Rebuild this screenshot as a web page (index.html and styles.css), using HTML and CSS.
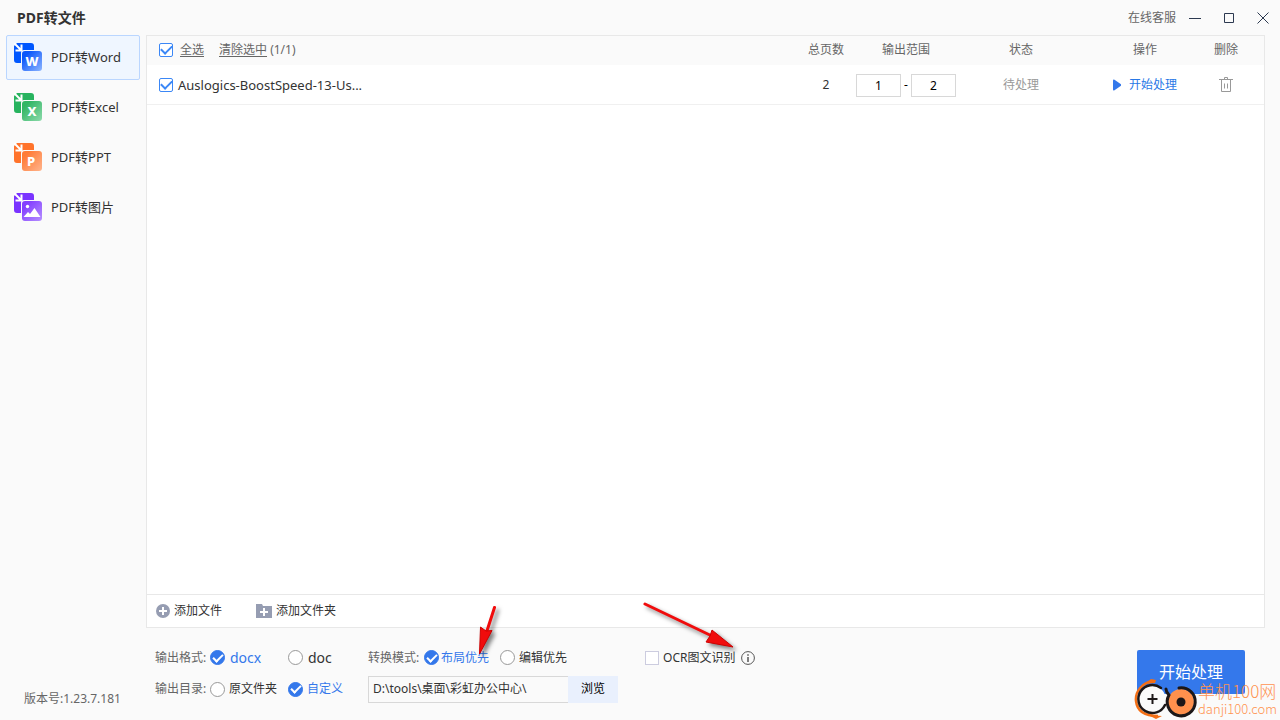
FILE: index.html
```html
<!DOCTYPE html>
<html lang="zh-CN">
<head>
<meta charset="utf-8">
<title>PDF转文件</title>
<link rel="stylesheet" href="styles.css">
</head>
<body>
<header class="titlebar">
  <h1 class="title">PDF转文件</h1>
  <a class="service" href="#">在线客服</a>
  <button class="win" aria-label="最小化"><svg width="14" height="14"><path d="M1 7.500h12" /></svg></button>
  <button class="win" aria-label="最大化"><svg width="14" height="14"><path d="M2.500 2.500h9v9h-9z" /></svg></button>
  <button class="win" aria-label="关闭"><svg width="14" height="14"><path d="M1.500 1.500l11 11M12.500 1.500l-11 11" /></svg></button>
</header>
<div class="body">
  <aside class="sidebar">
    <nav class="nav">
      <button class="nav-item active">
        <svg class="nav-icon" viewBox="0 0 28 28">
          <defs><linearGradient id="gw" x1="0" y1="0" x2="1" y2="1"><stop offset=".2" stop-color="#0b57fb"/><stop offset="1" stop-color="#8db5ff"/></linearGradient></defs>
          <path fill="#0057ff" d="M3 0h14a3 3 0 0 1 3 3v4H10a3 3 0 0 0-3 3v10H3a3 3 0 0 1-3-3V3z"/>
          <path class="arrow" d="M0 0l7 7M7.500 1.500v6h-6"/>
          <rect x="8" y="8" width="20" height="20" rx="3" fill="url(#gw)"/>
          <text x="18" y="22.500">W</text>
        </svg>
        <span>PDF转Word</span>
      </button>
      <button class="nav-item">
        <svg class="nav-icon" viewBox="0 0 28 28">
          <defs><linearGradient id="gx" x1="0" y1="0" x2="1" y2="1"><stop offset=".2" stop-color="#32b665"/><stop offset="1" stop-color="#8ddaab"/></linearGradient></defs>
          <path fill="#27b35e" d="M3 0h14a3 3 0 0 1 3 3v4H10a3 3 0 0 0-3 3v10H3a3 3 0 0 1-3-3V3z"/>
          <path class="arrow" d="M0 0l7 7M7.500 1.500v6h-6"/>
          <rect x="8" y="8" width="20" height="20" rx="3" fill="url(#gx)"/>
          <text x="18" y="22.500">X</text>
        </svg>
        <span>PDF转Excel</span>
      </button>
      <button class="nav-item">
        <svg class="nav-icon" viewBox="0 0 28 28">
          <defs><linearGradient id="gp" x1="0" y1="0" x2="1" y2="1"><stop offset=".2" stop-color="#ff7c38"/><stop offset="1" stop-color="#ffb48c"/></linearGradient></defs>
          <path fill="#ff732b" d="M3 0h14a3 3 0 0 1 3 3v4H10a3 3 0 0 0-3 3v10H3a3 3 0 0 1-3-3V3z"/>
          <path class="arrow" d="M0 0l7 7M7.500 1.500v6h-6"/>
          <rect x="8" y="8" width="20" height="20" rx="3" fill="url(#gp)"/>
          <text x="17" y="22.500">P</text>
        </svg>
        <span>PDF转PPT</span>
      </button>
      <button class="nav-item">
        <svg class="nav-icon" viewBox="0 0 28 28">
          <defs><linearGradient id="gi" x1="0" y1="0" x2="1" y2="1"><stop offset=".2" stop-color="#843fff"/><stop offset="1" stop-color="#b68fff"/></linearGradient></defs>
          <path fill="#7a33ff" d="M3 0h14a3 3 0 0 1 3 3v4H10a3 3 0 0 0-3 3v10H3a3 3 0 0 1-3-3V3z"/>
          <path class="arrow" d="M0 0l7 7M7.500 1.500v6h-6"/>
          <rect x="8" y="8" width="20" height="20" rx="3" fill="url(#gi)"/>
          <circle cx="13.500" cy="13.500" r="1.700" fill="#fff"/>
          <path fill="#fff" d="M9.500 24l4.500-5 2 2 4.500-6 6 9z"/>
        </svg>
        <span>PDF转图片</span>
      </button>
    </nav>
    <p class="version">版本号:1.23.7.181</p>
  </aside>
  <main class="main">
    <section class="panel">
      <table class="files">
        <colgroup><col><col class="c-pages"><col class="c-range"><col class="c-state"><col class="c-act"><col class="c-del"></colgroup>
        <thead>
          <tr>
            <th class="name">
              <div class="line">
                <input class="check" type="checkbox" id="all" checked>
                <label class="under" for="all">全选</label>
                <span class="clear"><a class="under" href="#">清除选中</a> (1/1)</span>
              </div>
            </th>
            <th>总页数</th><th>输出范围</th><th>状态</th><th>操作</th><th class="del">删除</th>
          </tr>
        </thead>
        <tbody>
          <tr>
            <td class="name">
              <div class="line file">
                <input class="check" type="checkbox" id="f1" checked>
                <label for="f1">Auslogics-BoostSpeed-13-Us...</label>
              </div>
            </td>
            <td>2</td>
            <td><div class="range"><input type="text" value="1" aria-label="起始页"><span>-</span><input type="text" value="2" aria-label="结束页"></div></td>
            <td class="waiting">待处理</td>
            <td><button class="run"><svg width="8" height="12"><path fill="#3478eb" d="M0 1.500Q0 0 1.500 .8L8 5.200v1.600L1.500 11.200Q0 12 0 10.500z"/></svg>开始处理</button></td>
            <td class="del"><button class="trash" aria-label="删除"><svg width="14" height="16"><path d="M0 2.500h14M5.500 2V.5h3V2M2.500 3v11.500h9V3M5.500 6.500v5M8.500 6.500v5"/></svg></button></td>
          </tr>
        </tbody>
      </table>
      <div class="adders">
        <button class="add"><svg width="14" height="14"><circle cx="7" cy="7" r="7" fill="#969db2"/><path stroke="#fff" stroke-width="2" d="M3 7h8M7 3v8"/></svg>添加文件</button>
        <button class="add"><svg width="16" height="14"><path fill="#969db2" d="M0 0h6l1 2h9v12H0z"/><path stroke="#fff" stroke-width="2" d="M4 8h8M8 4v8"/></svg>添加文件夹</button>
      </div>
    </section>
    <footer class="settings">
      <div class="options">
        <span class="caption">输出格式:</span>
        <label class="choice big"><input type="radio" name="fmt" checked><span>docx</span></label>
        <label class="choice big"><input type="radio" name="fmt"><span>doc</span></label>
        <div class="modes">
          <span class="caption mode-caption">转换模式:</span>
          <label class="choice tight"><input type="radio" name="mode" checked><span>布局优先</span></label>
          <label class="choice edit"><input type="radio" name="mode"><span>编辑优先</span></label>
          <label class="choice"><input class="check ocr" type="checkbox"><span>OCR图文识别</span></label>
          <svg class="info" width="14" height="14"><circle cx="7" cy="7" r="6.400" fill="none" stroke="#555"/><path stroke="#555" stroke-width="1.500" d="M7 6v5M7 3.200v1.500"/></svg>
        </div>
        <span class="caption">输出目录:</span>
        <label class="choice"><input type="radio" name="dir"><span>原文件夹</span></label>
        <label class="choice"><input type="radio" name="dir" checked><span>自定义</span></label>
        <div class="path"><input type="text" value="D:\tools\桌面\彩虹办公中心\" aria-label="输出目录"><button>浏览</button></div>
      </div>
      <button class="start">开始处理</button>
    </footer>
  </main>
</div>
<svg class="pointer pointer-a" width="36" height="64"><path d="M23.500 8.500L14 38" /><polygon points="8.500,55 9.500,28 15,32 21,31.500"/></svg>
<svg class="pointer pointer-b" width="104" height="60"><path d="M5 8L74 41"/><polygon points="93,51 66,46 70,40 72,34"/></svg>
<div class="mark">
  <svg width="64" height="42" fill="none">
    <path d="M20 3C8 4 1 14 2 23c1 9 8 15 22 15" stroke="#f36f16" stroke-width="2.500"/>
    <path d="M10 6l7-5 5 1-1 3zM14 37l8 4 6-3z" fill="#f36f16"/>
    <circle cx="18" cy="21" r="13.500" fill="#fafafa"/>
    <path d="M27 10A14 14 0 1 0 31 27" stroke="#1c1718" stroke-width="2.500" stroke-linecap="round"/>
    <path d="M13.500 21h10M18.500 16v10" stroke="#1c1718" stroke-width="2"/>
    <circle cx="47" cy="24" r="13" fill="#ff914d"/>
    <path d="M45 10A14 14 0 1 1 35 17q-3-3-3-6" stroke="#1c1718" stroke-width="3" stroke-linecap="round"/>
    <circle cx="47" cy="24" r="4.500" fill="#1c1718"/>
  </svg>
  <p class="mark-text"><span class="mark-name">单机100网</span><span class="mark-url">danji100.com</span></p>
</div>
</body>
</html>
```
FILE: styles.css
```css
* { box-sizing: border-box; }
body {
  margin: 0; min-height: 100vh; display: flex; flex-direction: column;
  position: relative; overflow: hidden; background: #fafafa; color: #333;
  font: 12px/16px "Noto Sans", "Noto Sans CJK SC", sans-serif;
}
button, input { font: inherit; color: inherit; }
button { border: 0; padding: 0; background: none; }
input { margin: 0; }
p, h1 { margin: 0; }
svg { display: block; flex: none; }

.titlebar { height: 35px; display: flex; align-items: center; padding: 0 10px 0 17px; }
.title { flex: 1; font-size: 14px; line-height: 20px; }
.service { color: #666; text-decoration: none; margin-right: 12px; }
.win { margin-right: 20px; }
.win:last-child { margin-right: 0; }
.win svg { fill: none; stroke: #2c3950; }

.body { flex: 1; display: flex; }
.sidebar { width: 146px; padding: 0 6px; display: flex; flex-direction: column; }
.nav { flex: 1; display: flex; flex-direction: column; gap: 5px; }
.nav-item {
  height: 45px; display: flex; align-items: center; gap: 9px; padding: 0 7px 1px;
  border: 1px solid transparent; border-radius: 2px; font-size: 13px;
}
.nav-item.active { background: #eff6ff; border-color: #bad6ff; }
.nav-icon { width: 28px; height: 28px; }
.nav-icon text { fill: #fff; font-size: 13px; font-weight: 800; text-anchor: middle; }
.arrow { fill: none; stroke: #fff; stroke-width: 2; }
.version { padding: 0 18px 13px; color: #666; }

.main { flex: 1; display: flex; flex-direction: column; padding-right: 15px; }
.panel { flex: 1; display: flex; flex-direction: column; justify-content: space-between; background: #fff; border: 1px solid #e8e8e8; }
.files { width: 100%; table-layout: fixed; border-collapse: separate; border-spacing: 0; }
.c-pages { width: 60px; }
.c-range { width: 100px; }
.c-state { width: 130px; }
.c-act { width: 118px; }
.c-del { width: 60px; }
.files th, .files td { padding: 0; text-align: center; font-weight: 400; vertical-align: middle; }
.files th { height: 29px; padding-bottom: 2px; background: #fafafa; color: #666; }
.files td { height: 40px; border-bottom: 1px solid #f0f0f0; }
.files .name { padding-left: 12px; text-align: left; }
.files .del { padding-right: 16px; }
.line { display: flex; align-items: center; gap: 7px; }
.file { gap: 5px; font-size: 13px; }
.under { color: inherit; text-decoration: underline; text-underline-offset: 2px; }
.clear { margin-left: 8px; }
.check {
  appearance: none; flex: none; width: 14px; height: 14px; display: grid; place-items: center;
  border: 1px solid #3b87f6; border-radius: 2px; background: #fff;
}
.check:checked::before {
  content: ""; width: 9px; height: 5px; margin-bottom: 2px;
  border: solid #3b87f6; border-width: 0 0 2px 2px; transform: rotate(-45deg);
}
.range { display: flex; justify-content: space-between; align-items: center; padding-top: 1px; color: #000; }
.range input { width: 45px; height: 23px; padding: 0; text-align: center; border: 1px solid #d8d8d8; background: #fff; }
.files .waiting { color: #999; }
.run { display: inline-flex; align-items: center; gap: 8px; color: #2878e6; vertical-align: middle; }
.trash { display: inline-block; vertical-align: middle; }
.trash svg { fill: none; stroke: #999; }
.adders { display: flex; gap: 34px; height: 33px; padding-left: 9px; border-top: 1px solid #e8e8e8; }
.add { display: flex; align-items: center; gap: 4px; }

.settings { height: 92px; display: flex; justify-content: space-between; padding: 14px 20px 0 9px; }
.options { display: grid; grid-template-columns: 55px 78px 80px auto; grid-template-rows: 31px 32px; align-items: center; align-content: start; }
.caption { color: #666; }
.choice { display: flex; align-items: center; gap: 4px; }
.big { gap: 5px; font-size: 14px; }
.tight { gap: 2px; }
.choice input[type="radio"] {
  appearance: none; width: 15px; height: 15px; flex: none; display: grid; place-items: center;
  border: 1px solid #999; border-radius: 50%; background: #fff;
}
.choice input[type="radio"]:checked { background: #3478eb; border-color: #3478eb; }
.choice input[type="radio"]:checked::before {
  content: ""; width: 8px; height: 4px; margin-bottom: 2px;
  border: solid #fff; border-width: 0 0 2px 2px; transform: rotate(-45deg);
}
.choice input[type="radio"]:checked + span { color: #3478eb; }
.modes { display: flex; align-items: center; }
.mode-caption { width: 56px; }
.edit { margin: 0 78px 0 11px; }
.ocr { border-color: #ccccdf; border-radius: 0; }
.info { margin-left: 6px; }
.path { display: flex; }
.path input { width: 200px; height: 27px; padding: 0 4px 2px; border: 1px solid #d8d8d8; border-right: 0; background: #fafafa; }
.path button { width: 50px; background: #e9f0fd; color: #000; }
.start { width: 108px; height: 44px; margin-top: 8px; border-radius: 2px; background: #3478eb; color: #fff; font-size: 16px; }

.pointer { position: absolute; fill: #f00c0c; stroke: #c00; stroke-width: 1; filter: drop-shadow(3px 3px 2px rgba(0, 0, 0, .5)); pointer-events: none; }
.pointer path { stroke: #f00c0c; stroke-width: 3; stroke-linecap: round; }
.pointer-a { left: 471px; top: 599px; }
.pointer-b { left: 640px; top: 596px; }
.mark { position: absolute; right: 3px; bottom: 0; display: flex; align-items: center; color: #ff9350; pointer-events: none; }
.mark-text { display: flex; flex-direction: column; }
.mark-name { font: 300 17px/20px "Noto Sans CJK SC", sans-serif; }
.mark-url { font: 300 13px/16px "Noto Sans CJK SC", sans-serif; }
```
